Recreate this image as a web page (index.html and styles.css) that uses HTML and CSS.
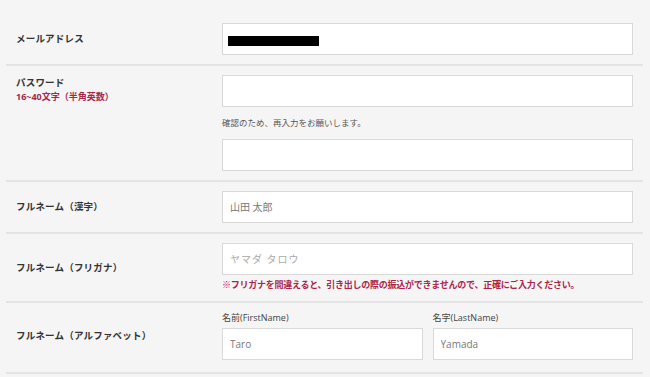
FILE: index.html
```html
<!DOCTYPE html>
<html lang="ja">
<head>
    <meta charset="UTF-8">
    <meta name="viewport" content="width=device-width, initial-scale=1.0">
    <title>会員登録</title>
    <link rel="stylesheet" href="styles.css">
</head>
<body>
    <div class="form">
        <div class="row">
            <div class="label">メールアドレス</div>
            <div class="field">
                <div class="input-wrap">
                    <input type="text" class="input">
                    <span class="redact"></span>
                </div>
            </div>
        </div>

        <div class="row row-top">
            <div class="label">
                パスワード
                <span class="hint">16~40文字（半角英数）</span>
            </div>
            <div class="field">
                <input type="password" class="input">
                <p class="note">確認のため、再入力をお願いします。</p>
                <input type="password" class="input">
            </div>
        </div>

        <div class="row">
            <div class="label">フルネーム（漢字）</div>
            <div class="field">
                <input type="text" class="input" placeholder="山田 太郎">
            </div>
        </div>

        <div class="row">
            <div class="label">フルネーム（フリガナ）</div>
            <div class="field">
                <input type="text" class="input kana" placeholder="ヤマダ タロウ">
                <p class="warn">※フリガナを間違えると、引き出しの際の振込ができませんので、正確にご入力ください。</p>
            </div>
        </div>

        <div class="row row-last">
            <div class="label">フルネーム（アルファベット）</div>
            <div class="field name-grid">
                <div>
                    <div class="sub">名前(FirstName)</div>
                    <input type="text" class="input" placeholder="Taro">
                </div>
                <div>
                    <div class="sub">名字(LastName)</div>
                    <input type="text" class="input" placeholder="Yamada">
                </div>
            </div>
        </div>
    </div>
</body>
</html>
```

FILE: styles.css
```css
body {
    margin: 0;
    padding-top: 13px;
    background-color: #f5f5f5;
    font-family: "Open Sans", "Noto Sans CJK JP", sans-serif;
    color: #333;
}
.form {
    margin: 0 7px 0 6px;
}
.row {
    display: flex;
    align-items: center;
    padding: 9px 0;
    border-bottom: 2px solid #e4e4e4;
}
.row:first-child {
    padding-top: 10px;
}
.row-last {
    padding-bottom: 12px;
}
.row-top {
    align-items: flex-start;
}
.row-top .label {
    padding-top: 1px;
}
.label {
    width: 206px;
    padding-left: 10px;
    font-size: 9.5px;
    font-weight: bold;
    line-height: 14px;
    letter-spacing: 0.2px;
    color: #333;
}
.hint {
    display: block;
    font-size: 9px;
    letter-spacing: 0;
    color: #a8264c;
}
.field {
    flex: 1;
    padding-right: 10px;
}
.input-wrap {
    position: relative;
}
.input {
    display: block;
    width: 100%;
    height: 32px;
    box-sizing: border-box;
    margin: 0;
    padding: 0 7px;
    border: 1px solid #d9d9d9;
    background-color: #fff;
    font-family: "Open Sans", "Noto Sans CJK JP", sans-serif;
    font-size: 10px;
    color: #333;
    outline: none;
}
.input::placeholder {
    color: #777;
}
.kana::placeholder {
    color: #aaa;
    letter-spacing: 1px;
}
.redact {
    position: absolute;
    left: 6px;
    top: 13px;
    width: 91px;
    height: 10px;
    background-color: #000;
}
.note {
    margin: 0;
    line-height: 32px;
    font-size: 8.5px;
    color: #555;
}
.warn {
    margin: 1px 0 -2px;
    line-height: 18px;
    font-size: 9px;
    font-weight: bold;
    color: #ac2449;
    letter-spacing: -0.25px;
}
.name-grid {
    display: grid;
    grid-template-columns: 1fr 1fr;
    gap: 10px;
}
.sub {
    font-size: 9px;
    line-height: 12px;
    margin-bottom: 4px;
    color: #444;
}
```
